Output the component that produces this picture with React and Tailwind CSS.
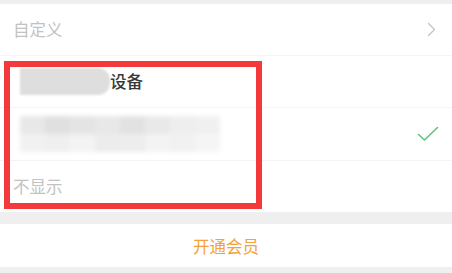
import React from "react";

const Chevron = () => (
  <svg width="9" height="15" viewBox="0 0 9 15" fill="none">
    <path d="M1.5 1.5 L7.5 7.5 L1.5 13.5" stroke="#c4c4c4" strokeWidth="1.4" strokeLinecap="round" strokeLinejoin="round" />
  </svg>
);

const Check = () => (
  <svg width="22" height="16" viewBox="0 0 22 16" fill="none">
    <path d="M1.5 8.5 L7.5 14 L20.5 1.5" stroke="#63c27a" strokeWidth="1.6" strokeLinecap="round" strokeLinejoin="round" />
  </svg>
);

// mosaic cells for the blurred-out device name
const mosaicTop = ["#e8e8e8", "#e0e0e0", "#e4e4e4", "#e8e8e8", "#e2e2e2", "#e9e9e9", "#eeeeee", "#f0f0f0"];
const mosaicBottom = ["#f1f1f1", "#efefef", "#f3f3f3", "#ececec", "#ededed", "#f3f3f3", "#f1f1f1", "#f5f5f5"];

const App = () => {
  return (
    <div
      className="relative w-[452px] h-[273px] overflow-hidden bg-[#efefef] pt-[4px]"
      style={{ fontFamily: '"Noto Sans CJK SC", "Noto Sans", sans-serif' }}
    >
      <div className="bg-white">
        <div className="flex items-center justify-between h-[52px] pl-[13px] pr-[16px] border-b border-[#f4f4f4]">
          <span className="text-[16.5px] text-[#c2c2c2]">自定义</span>
          <Chevron />
        </div>
        <div className="flex items-center h-[52px] pl-[20px] border-b border-[#f4f4f4]">
          <div className="w-[90px] h-[27px] rounded-r-[12px] bg-[#dedede] blur-[1px]" />
          <span className="text-[16.5px] font-medium text-[#383838]">设备</span>
        </div>
        <div className="flex items-center justify-between h-[53px] pl-[20px] pr-[13px] border-b border-[#f4f4f4]">
          <div className="flex flex-col w-[200px] h-[36px] blur-[2px]">
            <div className="flex flex-1">
              {mosaicTop.map((c, i) => (
                <div key={i} className="flex-1" style={{ background: c }} />
              ))}
            </div>
            <div className="flex flex-1">
              {mosaicBottom.map((c, i) => (
                <div key={i} className="flex-1" style={{ background: c }} />
              ))}
            </div>
          </div>
          <Check />
        </div>
        <div className="flex items-center h-[51px] pl-[13px]">
          <span className="text-[16.5px] text-[#c2c2c2]">不显示</span>
        </div>
      </div>
      <div className="mt-[12px] flex items-center justify-center h-[43px] pt-[2px] bg-white">
        <span className="text-[16.5px] text-[#f5a23c]">开通会员</span>
      </div>
      <div className="absolute left-[4px] top-[61px] w-[258px] h-[148px] border-[6px] border-[#f23a3c]" />
    </div>
  );
};

export default App;
